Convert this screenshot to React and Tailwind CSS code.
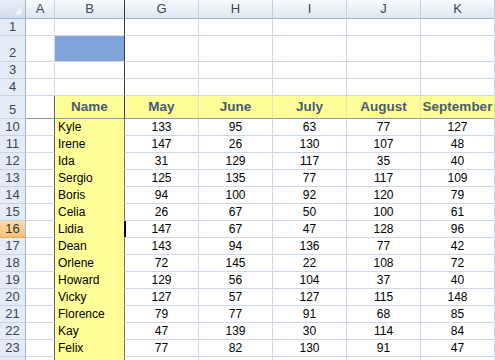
import React from 'react';

const rows = [
  [10, 'Kyle', 133, 95, 63, 77, 127],
  [11, 'Irene', 147, 26, 130, 107, 48],
  [12, 'Ida', 31, 129, 117, 35, 40],
  [13, 'Sergio', 125, 135, 77, 117, 109],
  [14, 'Boris', 94, 100, 92, 120, 79],
  [15, 'Celia', 26, 67, 50, 100, 61],
  [16, 'Lidia', 147, 67, 47, 128, 96],
  [17, 'Dean', 143, 94, 136, 77, 42],
  [18, 'Orlene', 72, 145, 22, 108, 72],
  [19, 'Howard', 129, 56, 104, 37, 40],
  [20, 'Vicky', 127, 57, 127, 115, 148],
  [21, 'Florence', 79, 77, 91, 68, 85],
  [22, 'Kay', 47, 139, 30, 114, 84],
  [23, 'Felix', 77, 82, 130, 91, 47],
];

const months = ['May', 'June', 'July', 'August', 'September'];
const letters = ['G', 'H', 'I', 'J', 'K'];

function ColHead({ children, dark }) {
  return (
    <div
      className={`h-[19px] flex items-center justify-center border-b border-r border-b-[#9eb6ce] bg-gradient-to-b from-[#f8fafd] to-[#dfe7f1] text-[13px] text-[#3b4656] ${
        dark ? 'border-r-[#3a3a3a]' : 'border-r-[#c3d0e0]'
      }`}
    >
      {children}
    </div>
  );
}

function RowHead({ children, h, active }) {
  return (
    <div
      className={`${h} flex items-end justify-center pb-[1px] border-r border-b border-r-[#9eb6ce] text-[13px] leading-[15px] ${
        active
          ? 'bg-gradient-to-b from-[#fbdcaa] to-[#f6c077] border-b-[#e2a85c] text-[#333]'
          : 'bg-[#e4ecf7] border-b-[#c6d4e6] text-[#3b4656]'
      }`}
    >
      {children}
    </div>
  );
}

function EmptyRow({ n, h, fillB }) {
  return (
    <>
      <RowHead h={h}>{n}</RowHead>
      <div className={`${h} border-r border-b border-[#d0d7e5]`} />
      <div
        className={`${h} border-r border-b border-b-[#d0d7e5] border-r-[#3a3a3a] ${
          fillB ? 'bg-[#7fa5da] border-b-[#7fa5da]' : ''
        }`}
      />
      {letters.map((l) => (
        <div key={l} className={`${h} border-r border-b border-[#d0d7e5]`} />
      ))}
    </>
  );
}

export default function App() {
  return (
    <div className="w-[495px] h-[360px] overflow-hidden bg-white font-['Liberation_Sans',Arial,sans-serif]">
      <div className="grid grid-cols-[26px_29px_70px_74px_74px_74px_74px_74px]">
        {/* column headers */}
        <div className="h-[19px] relative border-r border-b border-r-[#9eb6ce] border-b-[#9eb6ce] bg-gradient-to-b from-[#e9eff7] to-[#d3deec]">
          <svg className="absolute right-[3px] bottom-[3px]" width="9" height="9" viewBox="0 0 9 9">
            <polygon points="9,0 9,9 0,9" fill="#f4f7fb" stroke="#b9c7d9" strokeWidth="0.5" />
          </svg>
        </div>
        <ColHead>A</ColHead>
        <ColHead dark>B</ColHead>
        {letters.map((l) => (
          <ColHead key={l}>{l}</ColHead>
        ))}

        <EmptyRow n={1} h="h-[17px]" />
        <EmptyRow n={2} h="h-[26px]" fillB />
        <EmptyRow n={3} h="h-[17px]" />
        <EmptyRow n={4} h="h-[17px]" />

        {/* header row 5 */}
        <RowHead h="h-[23px]">5</RowHead>
        <div className="h-[23px] border-r border-b border-r-[#5f5f5f] border-b-[#8c99aa]" />
        <div className="h-[23px] flex items-end justify-center pb-[1px] bg-[#ffff99] border-r border-b border-r-[#3a3a3a] border-b-[#8c99aa] text-[13.5px] font-bold text-[#4b5a6f]">
          Name
        </div>
        {months.map((m) => (
          <div
            key={m}
            className="h-[23px] flex items-end justify-center pb-[1px] bg-[#ffff99] border-r border-b border-r-[#e6e4b0] border-b-[#8c99aa] text-[13.5px] font-bold text-[#4b5a6f] whitespace-nowrap overflow-hidden"
          >
            {m}
          </div>
        ))}

        {/* data */}
        {rows.map(([n, name, ...vals]) => {
          const active = n === 16;
          return (
            <React.Fragment key={n}>
              <RowHead h="h-[17px]" active={active}>
                {n}
              </RowHead>
              <div className="h-[17px] border-r border-b border-r-[#5f5f5f] border-b-[#d0d7e5]" />
              <div
                className={`h-[17px] flex items-center pl-[3px] bg-[#ffff99] border-r border-b border-b-[#ffff99] text-[12px] text-black ${
                  active ? 'border-r-black' : 'border-r-[#6e6e6e]'
                }`}
              >
                {name}
              </div>
              {vals.map((v, i) => (
                <div
                  key={i}
                  className={`h-[17px] flex items-center justify-center border-r border-b border-[#d0d7e5] text-[12px] text-black ${
                    active && i === 0 ? 'shadow-[inset_1px_0_0_#000]' : ''
                  }`}
                >
                  {v}
                </div>
              ))}
            </React.Fragment>
          );
        })}

        {/* partial row below, only its top edge shows */}
        <div className="h-[17px] bg-[#e4ecf7] border-r border-r-[#9eb6ce]" />
        <div className="h-[17px] border-r border-r-[#5f5f5f]" />
        <div className="h-[17px] bg-[#ffff99] border-r border-r-[#6e6e6e]" />
        {letters.map((l) => (
          <div key={l} className="h-[17px] border-r border-[#d0d7e5]" />
        ))}
      </div>
    </div>
  );
}
